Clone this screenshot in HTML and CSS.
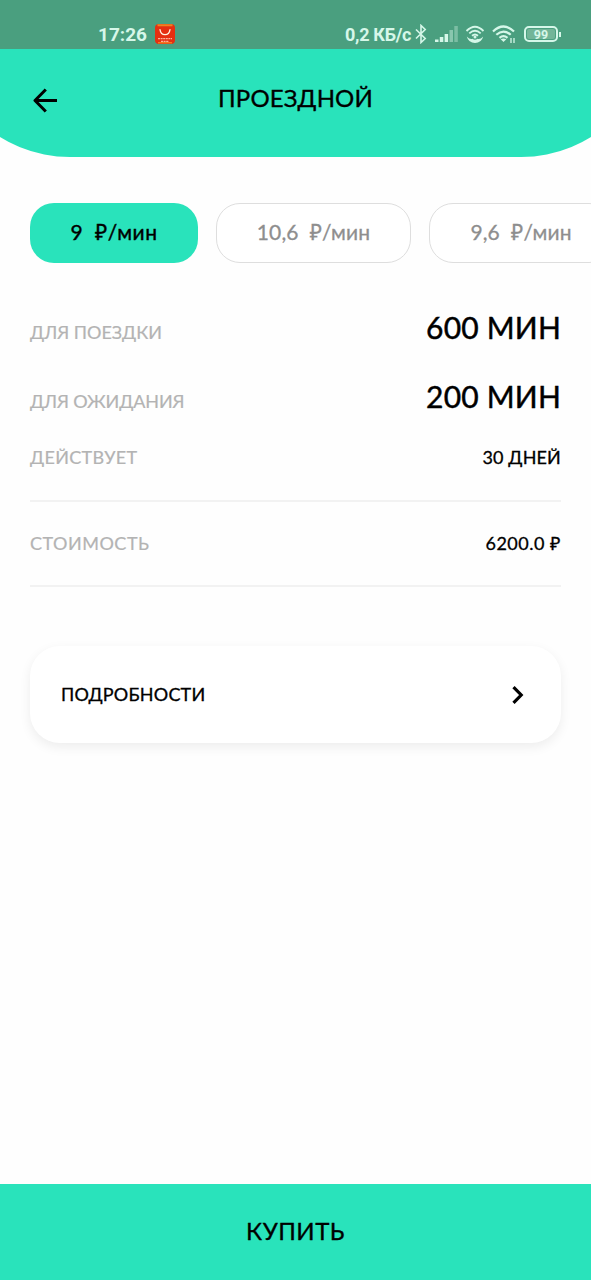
FILE: index.html
```html
<!DOCTYPE html>
<html lang="ru">
<head>
<meta charset="utf-8">
<title>Проездной</title>
<link rel="stylesheet" href="styles.css">
</head>
<body>
<div class="app">
  <header class="header">
    <div class="status">
      <span class="clock">17:26</span>
      <svg class="shop" width="20" height="20" viewBox="0 0 20 20">
        <rect width="20" height="20" rx="4" fill="#e52f10"/>
        <path d="M2.500 1.200H17.500" stroke="#ee8222" stroke-width="2"/>
        <path d="M3 18.800H17" stroke="#f47b20" stroke-width="1.600"/>
        <path d="M5 5.600C6 12.400 14 12.400 15 5.600" fill="none" stroke="#fff2df" stroke-width="1.300" stroke-linecap="round"/>
        <path d="M3 14.600H17M6 17.400H14" stroke="#ffb199" stroke-width="1.100" stroke-dasharray="2 .6"/>
      </svg>
      <span class="speed">0,2 КБ/с</span>
      <svg class="bt" width="12" height="20" viewBox="0 0 12 20" fill="none" stroke="#d6f7e9" stroke-width="1.600"><path d="M1 5.500L10.200 14.500L6 18.500V1.500L10.200 5.500L1 14.500"/></svg>
      <svg class="signal" width="23" height="17" viewBox="0 0 23 17" fill="#d6f7e9"><rect y="13.500" width="3.500" height="2.500"/><rect x="4.800" y="11" width="3.500" height="5"/><rect x="9.600" y="8" width="3.500" height="8"/><rect x="14.500" y="4" width="3.500" height="12" opacity=".45"/><rect x="19.300" y="0" width="3.500" height="16" opacity=".35"/></svg>
      <svg class="hotspot" width="20" height="20" viewBox="0 0 20 20" fill="none" stroke="#d6f7e9" stroke-width="1.800"><path d="M1.500 7Q10-1.500 18.500 7M4.300 9.400Q10 4 15.700 9.400M7 11.800Q10 9.200 13 11.800"/><circle cx="10" cy="13" r="1.500" fill="#d6f7e9" stroke="none"/><path d="M1.800 12.500Q5 16 7.500 14.800Q10 16.800 12.500 14.800Q15 16 18.200 12.500Q16.500 19 10 19Q3.500 19 1.800 12.500Z" fill="#d6f7e9" stroke="none"/></svg>
      <svg class="wifi" width="24" height="20" viewBox="0 0 24 20" fill="none" stroke="#d6f7e9" stroke-width="2.200"><path d="M1 7.500Q11.500-2.500 22 7.500M4.300 10.800Q11.500 4.300 18.700 10.800M7.500 13.800Q11.500 10.500 15.500 13.800"/><path d="M8.700 15.300Q11.500 13.600 14.300 15.300L11.500 18Z" fill="#d6f7e9" stroke="none"/><path d="M19 14V19M22 14V19" stroke-width="1.300"/></svg>
      <span class="battery"><span class="level">99</span></span><i class="tip"></i>
    </div>
    <div class="bar">
      <svg class="back" width="26" height="26" viewBox="0 0 26 26" fill="none" stroke="#000" stroke-width="3" stroke-linejoin="round"><path d="M12.800 2.500L2 13.500L12.800 24.500M2 13.500H24"/></svg>
      <h1 class="title">ПРОЕЗДНОЙ</h1>
    </div>
  </header>
  <nav class="tariffs">
    <button class="pill active"><span>9&nbsp; ₽/мин</span></button>
    <button class="pill second"><span>10,6&nbsp; ₽/мин</span></button>
    <button class="pill third"><span>9,6&nbsp; ₽/мин</span></button>
  </nav>
  <main class="details">
    <div class="row big"><span class="label l1">ДЛЯ ПОЕЗДКИ</span><span class="value">600 МИН</span></div>
    <div class="row big"><span class="label l2">ДЛЯ ОЖИДАНИЯ</span><span class="value">200 МИН</span></div>
    <div class="row period"><span class="label l3">ДЕЙСТВУЕТ</span><span class="value days">30 ДНЕЙ</span></div>
    <div class="row cost"><span class="label l4">СТОИМОСТЬ</span><span class="value price">6200.0 ₽</span></div>
    <a class="more"><span class="moretext">ПОДРОБНОСТИ</span>
      <svg width="12" height="18" viewBox="0 0 12 18" fill="none" stroke="#000" stroke-width="3.200"><path d="M1.500 1.200L9.200 9L1.500 16.800"/></svg></a>
  </main>
  <button class="buy"><span>КУПИТЬ</span></button>
</div>
</body>
</html>
```
FILE: styles.css
```css
* { box-sizing: border-box; }
body { margin: 0; background: #fefefe; font-family: Lato, "Noto Sans", sans-serif; color: #000; }
button { font: inherit; border: 0; padding: 0; }
.app { width: 591px; height: 1280px; overflow: hidden; display: flex; flex-direction: column; }
.header { flex: none; height: 157px; margin: 0 -62px; border-radius: 0 0 132px 132px; background: #29e3bb; overflow: hidden; }
.status { height: 49px; padding: 19px 62px 0; background: #4a9f7f; color: #d6f7e9; display: flex; align-items: center; font: 700 18px/30px Roboto, sans-serif; }
.clock { margin-left: 98px; width: 57px; font-size: 19px; padding-top: 1px; }
.speed { margin-left: 170px; width: 70px; padding-top: 1px; white-space: nowrap; letter-spacing: -.3px; }
.bt { margin-left: 0; }
.signal { margin-left: 8px; }
.hotspot { margin-left: 7px; }
.wifi { margin-left: 7px; }
.battery { margin-left: 8px; width: 34px; height: 16px; border: 2px solid #d6f7e9; border-radius: 5px; padding: 1px; }
.level { display: block; height: 10px; border-radius: 2px; background: #72b598; font: 700 12.5px/11px Roboto, sans-serif; text-align: center; }
.tip { width: 2px; height: 5px; margin-left: 1px; background: #d6f7e9; }
.bar { height: 108px; padding: 0 62px; display: grid; grid-template-columns: 90px 1fr 90px; }
.back { margin: 38px 0 0 33px; }
.title { margin: 34px 0 0; text-align: center; font-size: 24px; line-height: 30px; font-weight: 400; letter-spacing: .15px; -webkit-text-stroke: .35px; }
.tariffs { flex: none; display: flex; gap: 18px; margin: 46px 0 0 30px; }
.pill { flex: none; height: 60px; border: 1px solid #dedede; border-radius: 24px; background: #fff; color: #8e8e8e; font-size: 21px; font-weight: 400; letter-spacing: .15px; -webkit-text-stroke: .3px; padding-bottom: 2px; width: 195px; white-space: nowrap; }
.pill.active { width: 168px; border: 0; background: #29e3bb; color: #000; letter-spacing: .55px; -webkit-text-stroke: .4px; }
.pill.third { width: 184px; }
.details { flex: 1; padding: 30px 30px 0; }
.row { display: flex; justify-content: space-between; align-items: baseline; }
.big { height: 69px; line-height: 68px; }
.label { font-size: 18px; color: #b3b3b3; font-weight: 400; -webkit-text-stroke: .2px; }
.l2 { letter-spacing: -.12px; }
.l3 { letter-spacing: .3px; }
.l4 { letter-spacing: .5px; }
.value { font-size: 30px; font-weight: 400; letter-spacing: .2px; -webkit-text-stroke: .45px; }
.big .label { padding-bottom: 1px; }
.period, .cost { line-height: 24px; border-bottom: 2px solid #f2f2f2; }
.period { height: 71px; padding-top: 14px; }
.cost { height: 85px; padding-top: 29px; }
.days, .price { font-size: 18px; letter-spacing: .15px; -webkit-text-stroke: .3px; }
.price { letter-spacing: .5px; }
.more { margin-top: 59px; height: 97px; padding: 0 37px 0 31px; border-radius: 30px; background: #fff; box-shadow: 0 4px 12px rgba(0,0,0,.07); display: flex; align-items: center; justify-content: space-between; font-size: 18px; letter-spacing: .2px; -webkit-text-stroke: .3px; }
.moretext { padding-bottom: 2px; }
.buy { flex: none; height: 96px; background: #29e3bb; color: #000; font-size: 24px; letter-spacing: .5px; -webkit-text-stroke: .35px; padding-bottom: 3px; }
```
